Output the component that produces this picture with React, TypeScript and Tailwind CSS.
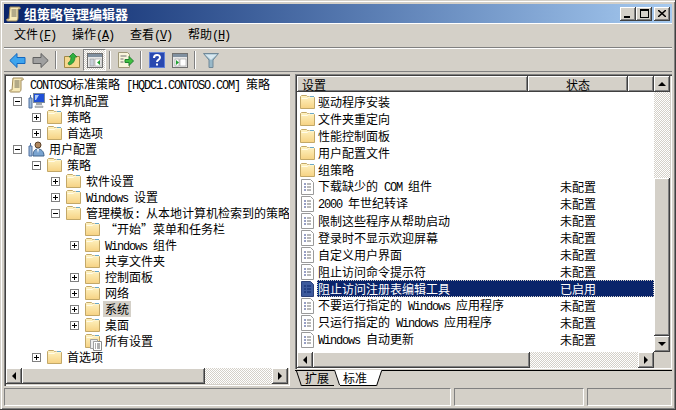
import React from 'react';

const raised = 'bg-[#d4d0c8] shadow-[inset_-1px_-1px_0_#404040,inset_1px_1px_0_#fff,inset_-2px_-2px_0_#808080]';
const sunken = 'shadow-[inset_1px_1px_0_#808080,inset_2px_2px_0_#404040,inset_-1px_-1px_0_#fff]';
const dither = 'bg-[repeating-conic-gradient(#d4d0c8_0_25%,#ffffff_0_50%)] bg-[length:2px_2px]';
const latin = "font-['Liberation_Mono',monospace] text-[12px] tracking-[-1.2px] whitespace-pre";

// SimSun style: latin glyphs are half as wide as the CJK ones, 6px per char
const T: React.FC<{ text: string }> = ({ text }) => (
  <>
    {text.split(/([\x20-\x7e]+)/).map((part, i) =>
      /^[\x20-\x7e]+$/.test(part) ? (
        <span key={i} className={latin}>{part}</span>
      ) : (
        <span key={i}>{part}</span>
      )
    )}
  </>
);

const ScrollIcon = () => (
  <svg width="16" height="16" viewBox="0 0 16 16" className="shrink-0">
    <path d="M4 1h9c1 0 2 1 1 2h-2v9c0 2-1 3-2 3H2c-1 0-2-1-1-2h2z" fill="#f7e9b8" stroke="#a08a58" />
    <path d="M5.500 4h5M5.500 6h5M5.500 8h5M5.500 10h5" stroke="#6e6a58" />
  </svg>
);

const Folder = () => (
  <svg width="15" height="14" viewBox="0 0 15 14" className="shrink-0">
    <defs>
      <linearGradient id="fold" x1="0" y1="0" x2="0" y2="1">
        <stop offset="0" stopColor="#fff4c4" />
        <stop offset="1" stopColor="#f6d283" />
      </linearGradient>
    </defs>
    <path d="M.5 13.500V1.500l1-1h5l1 1h6l1 1v11z" fill="url(#fold)" stroke="#c3a868" />
    <path d="M1.500 3.500h6l1-1.500h5" fill="none" stroke="#fffbe8" />
    <path d="M10 1h4v1h-4z" fill="#6aa8c8" />
  </svg>
);

const PolicyDoc: React.FC<{ selected?: boolean }> = ({ selected }) => (
  <svg width="15" height="16" viewBox="0 0 15 16" className="shrink-0">
    <path d="M1.500.5h9l3 3v12h-12z" fill={selected ? '#3d5a9c' : '#fff'} stroke={selected ? '#2a3f78' : '#9a9a9a'} />
    <path d="M4 5h2M4 8h2M4 11h2" stroke={selected ? '#0a246a' : '#30408a'} />
    <path d="M7 5h4M7 8h4M7 11h4" stroke={selected ? '#0a246a' : '#707070'} />
  </svg>
);

const Computer = () => (
  <svg width="17" height="16" viewBox="0 0 17 16" className="shrink-0">
    <rect x="5.500" y=".5" width="11" height="9" fill="#2050d8" stroke="#7a8a9a" />
    <path d="M7 2h4l-3 5H7z" fill="#a8c8f8" />
    <path d="M8 10h6v2H8z" fill="#a0a8b0" />
    <path d="M7 13h8v1.500H7z" fill="#c0c4c8" stroke="#808890" strokeWidth=".5" />
    <path d="M1 5h3v10H1z" fill="#9ab8d8" stroke="#5070a0" />
    <path d="M2.500 2v3" stroke="#5070a0" />
  </svg>
);

const UserIcon = () => (
  <svg width="17" height="16" viewBox="0 0 17 16" className="shrink-0">
    <circle cx="10" cy="4" r="3" fill="#b08860" stroke="#5a4028" />
    <path d="M5 15c0-5 2-7 5-7s6 2 6 7z" fill="#7aa4d0" stroke="#40648c" />
    <path d="M9 8l1 4 1-4z" fill="#fff" />
    <path d="M1 5h3v10H1z" fill="#9ab8d8" stroke="#5070a0" />
    <path d="M2.500 2v3" stroke="#5070a0" />
  </svg>
);

const AllSettings = () => (
  <div className="relative w-[15px] h-[14px] shrink-0">
    <Folder />
    <svg width="12" height="12" viewBox="0 0 12 12" className="absolute left-[5px] top-[5px]">
      <path d="M3.500 2.500h8v9h-8z" fill="#fff" stroke="#8a8a8a" />
      <path d="M.5.5h7v2h-4v7h-3z" fill="#eee" stroke="#a0a0a0" />
      <path d="M5 5h1M7 5h3M5 7h1M7 7h3M5 9h1M7 9h3" stroke="#606060" />
    </svg>
  </div>
);

const Expander: React.FC<{ open?: boolean }> = ({ open }) => (
  <span className="relative w-[9px] h-[9px] border border-[#808080] bg-white block shrink-0">
    <span className="absolute left-[1px] top-[3px] w-[5px] h-[1px] bg-black" />
    {!open && <span className="absolute left-[3px] top-[1px] w-[1px] h-[5px] bg-black" />}
  </span>
);

type TreeRow = { level: number; text: string; exp?: 'open' | 'closed'; icon?: 'computer' | 'user' | 'all'; selected?: boolean };

const treeRows: TreeRow[] = [
  { level: 0, text: '计算机配置', exp: 'open', icon: 'computer' },
  { level: 1, text: '策略', exp: 'closed' },
  { level: 1, text: '首选项', exp: 'closed' },
  { level: 0, text: '用户配置', exp: 'open', icon: 'user' },
  { level: 1, text: '策略', exp: 'open' },
  { level: 2, text: '软件设置', exp: 'closed' },
  { level: 2, text: 'Windows 设置', exp: 'closed' },
  { level: 2, text: '管理模板: 从本地计算机检索到的策略', exp: 'open' },
  { level: 3, text: '“开始”菜单和任务栏' },
  { level: 3, text: 'Windows 组件', exp: 'closed' },
  { level: 3, text: '共享文件夹' },
  { level: 3, text: '控制面板', exp: 'closed' },
  { level: 3, text: '网络', exp: 'closed' },
  { level: 3, text: '系统', exp: 'closed', selected: true },
  { level: 3, text: '桌面', exp: 'closed' },
  { level: 3, text: '所有设置', icon: 'all' },
  { level: 1, text: '首选项', exp: 'closed' },
];

type ListRow = { text: string; state?: string; folder?: boolean; selected?: boolean };

const listRows: ListRow[] = [
  { text: '驱动程序安装', folder: true },
  { text: '文件夹重定向', folder: true },
  { text: '性能控制面板', folder: true },
  { text: '用户配置文件', folder: true },
  { text: '组策略', folder: true },
  { text: '下载缺少的 COM 组件', state: '未配置' },
  { text: '2000 年世纪转译', state: '未配置' },
  { text: '限制这些程序从帮助启动', state: '未配置' },
  { text: '登录时不显示欢迎屏幕', state: '未配置' },
  { text: '自定义用户界面', state: '未配置' },
  { text: '阻止访问命令提示符', state: '未配置' },
  { text: '阻止访问注册表编辑工具', state: '已启用', selected: true },
  { text: '不要运行指定的 Windows 应用程序', state: '未配置' },
  { text: '只运行指定的 Windows 应用程序', state: '未配置' },
  { text: 'Windows 自动更新', state: '未配置' },
];

const Arrow: React.FC<{ dir: 'up' | 'down' | 'left' | 'right' }> = ({ dir }) => {
  const pts = { up: '4,0 8,4 0,4', down: '0,0 8,0 4,4', left: '4,0 4,8 0,4', right: '0,0 4,4 0,8' }[dir];
  const vertical = dir === 'up' || dir === 'down';
  return (
    <svg width={vertical ? 8 : 4} height={vertical ? 4 : 8} viewBox={vertical ? '0 0 8 4' : '0 0 4 8'}>
      <polygon points={pts} fill="#000" />
    </svg>
  );
};

const ScrollBtn: React.FC<{ dir: 'up' | 'down' | 'left' | 'right' }> = ({ dir }) => (
  <div className={`${raised} w-[16px] h-[16px] shrink-0 flex items-center justify-center`}>
    <Arrow dir={dir} />
  </div>
);

const Sep = () => <div className="w-[2px] h-[18px] mx-[3px] border-l border-[#808080] border-r border-r-white" />;

const ToolBtn: React.FC<{ children: React.ReactNode; active?: boolean }> = ({ children, active }) => (
  <div className={`w-[23px] h-[22px] flex items-center justify-center ${active ? `border border-t-[#808080] border-l-[#808080] border-r-white border-b-white ${dither}` : ''}`}>
    {children}
  </div>
);

const PanelIcon: React.FC<{ right?: boolean }> = ({ right }) => (
  <svg width="16" height="15" viewBox="0 0 16 15">
    <rect x=".5" y=".5" width="15" height="14" fill="#e8e8e8" stroke="#707070" />
    <path d="M1 1h14v3H1z" fill="#8090a0" />
    <rect x="3" y="6" width="4" height="7" fill={right ? '#fff' : '#c8d0d8'} stroke="#8a8a8a" strokeWidth=".5" />
    <rect x="8" y="6" width="6" height="7" fill="#fff" stroke="#8a8a8a" strokeWidth=".5" />
    {right ? <polygon points="4,7 7,9.500 4,12" fill="#20a030" /> : <polygon points="13,7 10,9.500 13,12" fill="#20a030" />}
  </svg>
);

const App: React.FC = () => {
  return (
    <div className="w-[676px] h-[410px] overflow-hidden bg-[#d4d0c8] p-[4px] flex flex-col text-[12px] leading-[16px] text-black font-['Noto_Sans_CJK_SC','Liberation_Sans',sans-serif] shadow-[inset_-1px_-1px_0_#404040,inset_1px_1px_0_#d4d0c8,inset_2px_2px_0_#fff,inset_-2px_-2px_0_#808080]">
      {/* title bar */}
      <div className="h-[19px] shrink-0 flex items-center pl-[2px] pr-[2px] bg-gradient-to-r from-[#0a246a] to-[#a6caf0]">
        <ScrollIcon />
        <span className="ml-[2px] text-white font-bold text-[13px]">组策略管理编辑器</span>
        <div className="ml-auto flex items-center">
          <div className={`${raised} w-[16px] h-[14px] flex items-end pl-[4px] pb-[3px]`}>
            <span className="block w-[6px] h-[2px] bg-black" />
          </div>
          <div className={`${raised} w-[16px] h-[14px] flex items-center justify-center`}>
            <span className="block w-[9px] h-[9px] border border-black border-t-2" />
          </div>
          <div className={`${raised} w-[16px] h-[14px] ml-[2px] flex items-center justify-center`}>
            <svg width="8" height="7" viewBox="0 0 8 7"><path d="M0 0l8 7M8 0L0 7" stroke="#000" strokeWidth="1.500" /></svg>
          </div>
        </div>
      </div>

      {/* menu */}
      <div className="h-[25px] shrink-0 flex items-center pl-[10px] gap-[16px] pb-[1px] border-t border-t-white border-b border-b-[#808080]">
        {[['文件', 'F'], ['操作', 'A'], ['查看', 'V'], ['帮助', 'H']].map(([label, key]) => (
          <span key={key} className="w-[42px] whitespace-nowrap">
            {label}
            <span className={latin}>(<span className="underline">{key}</span>)</span>
          </span>
        ))}
      </div>

      {/* toolbar */}
      <div className="h-[24px] shrink-0 flex items-center pl-[2px] border-t border-t-white border-b border-b-[#808080]">
        <ToolBtn>
          <svg width="17" height="15" viewBox="0 0 17 15"><path d="M8 .5L.8 7.500 8 14.500v-4h8v-6H8z" fill="#3ea4ee" stroke="#1468c0" /></svg>
        </ToolBtn>
        <ToolBtn>
          <svg width="17" height="15" viewBox="0 0 17 15"><path d="M9 .5l7.200 7-7.200 7v-4H1v-6h8z" fill="#a0a0a0" stroke="#606060" /></svg>
        </ToolBtn>
        <Sep />
        <ToolBtn>
          <svg width="16" height="16" viewBox="0 0 16 16">
            <path d="M.5 15.500v-11h5l1-1h4v1h5v11z" fill="#f6d88c" stroke="#a08848" />
            <path d="M4 11c2-1 3-3 3-6H5l4-4 4 4h-2c0 4-2 7-6 8z" fill="#30b040" stroke="#187828" strokeWidth=".7" />
          </svg>
        </ToolBtn>
        <ToolBtn active><PanelIcon /></ToolBtn>
        <Sep />
        <ToolBtn>
          <svg width="17" height="16" viewBox="0 0 17 16">
            <path d="M1.500.5h9l2 2v13h-11z" fill="#f8f4dc" stroke="#a09878" />
            <path d="M3.500 4h6M3.500 7h3M3.500 10h3" stroke="#707070" />
            <path d="M8 7.500h4v-3l4.500 4.500-4.500 4.500v-3H8z" fill="#40c040" stroke="#208030" />
          </svg>
        </ToolBtn>
        <Sep />
        <ToolBtn>
          <svg width="16" height="16" viewBox="0 0 16 16">
            <rect width="16" height="16" fill="#2848b0" />
            <rect x=".5" y=".5" width="15" height="15" fill="none" stroke="#6080d8" />
            <path d="M5 6c0-4 6-4 6-.5 0 2-3 2.500-3 4.500" fill="none" stroke="#fff" strokeWidth="2" />
            <rect x="7" y="11.500" width="2" height="2" fill="#fff" />
          </svg>
        </ToolBtn>
        <ToolBtn><PanelIcon right /></ToolBtn>
        <Sep />
        <ToolBtn>
          <svg width="16" height="16" viewBox="0 0 16 16">
            <path d="M.5 1.500h15L10 8v7.500H6V8z" fill="#98b8c8" stroke="#708898" />
            <path d="M2 2.500h12L8 8z" fill="#d8e8f0" />
          </svg>
        </ToolBtn>
      </div>

      {/* panes */}
      <div className="flex-1 min-h-0 flex gap-[5px] mt-[2px]">
        <div className={`w-[286px] shrink-0 flex flex-col p-[2px] pr-[1px] pb-[2px] ${sunken}`}>
          <div className="flex-1 min-h-0 bg-white overflow-hidden pt-[1px] whitespace-nowrap">
            <div className="h-[16px] flex items-center pl-[3px]">
              <ScrollIcon />
              <span className="ml-[5px]"><T text="CONTOSO标准策略 [HQDC1.CONTOSO.COM] 策略" /></span>
            </div>
            {treeRows.map((row, i) => (
              <div
                key={i}
                className={`h-[16px] flex items-center ${row.level === 0 ? 'pl-[7px]' : row.level === 1 ? 'pl-[26px]' : row.level === 2 ? 'pl-[45px]' : 'pl-[64px]'}`}
              >
                <span className="w-[15px] shrink-0">{row.exp && <Expander open={row.exp === 'open'} />}</span>
                {row.icon === 'computer' ? <Computer /> : row.icon === 'user' ? <UserIcon /> : row.icon === 'all' ? <AllSettings /> : <Folder />}
                <span className={`${row.level === 0 ? 'ml-[2px]' : 'ml-[3px]'} px-[2px] h-[16px] ${row.selected ? 'bg-[#d4d0c8]' : ''}`}>
                  <T text={row.text} />
                </span>
              </div>
            ))}
          </div>
          <div className="h-[16px] shrink-0 flex pr-[1px]">
            <ScrollBtn dir="left" />
            <div className={`${raised} w-[183px]`} />
            <div className={`flex-1 ${dither}`} />
            <ScrollBtn dir="right" />
          </div>
        </div>

        <div className="flex-1 min-w-0 flex flex-col">
          <div className={`h-[295px] shrink-0 flex p-[2px] pb-[1px] ${sunken}`}>
            <div className="flex-1 min-w-0 flex flex-col">
              <div className="h-[16px] shrink-0 flex">
                <div className={`${raised} w-[231px] pl-[5px] leading-[17px]`}>设置</div>
                <div className={`${raised} w-[100px] text-center leading-[17px]`}>状态</div>
                <div className={`${raised} flex-1`} />
              </div>
              <div className="flex-1 min-h-0 bg-white pt-[1px] overflow-hidden">
                {listRows.map((row, i) => (
                  <div key={i} className="h-[17px] flex items-center pl-[3px]">
                    {row.folder ? <Folder /> : <PolicyDoc selected={row.selected} />}
                    <div className={`flex-1 flex items-center h-[17px] ml-[2px] pl-[1px] ${row.selected ? 'bg-[#0a246a] text-white outline-1 -outline-offset-1 outline-dotted outline-[#d4d0c8]' : ''}`}>
                      <span className="w-[242px] whitespace-nowrap"><T text={row.text} /></span>
                      <span>{row.state}</span>
                    </div>
                  </div>
                ))}
              </div>
              <div className="h-[16px] shrink-0 flex">
                <ScrollBtn dir="left" />
                <div className={`${raised} w-[217px]`} />
                <div className={`flex-1 ${dither}`} />
                <ScrollBtn dir="right" />
              </div>
            </div>
            <div className="w-[16px] shrink-0 flex flex-col">
              <ScrollBtn dir="up" />
              <div className={`h-[86px] ${dither}`} />
              <div className={`${raised} flex-1`} />
              <ScrollBtn dir="down" />
              <div className="h-[16px]" />
            </div>
          </div>

          {/* tabs: the active one breaks through the strip's top line */}
          <div className="flex-1 min-h-0 flex items-start pl-[1px] border-t border-t-black mt-[1px]">
            <svg width="6" height="15" viewBox="0 0 6 15" className="shrink-0"><path d="M.5 0l5 15" stroke="#000" fill="none" /></svg>
            <div className="w-[32px] h-[15px] pl-[3px] leading-[14px] border-b border-black">扩展</div>
            <svg width="6" height="15" viewBox="0 0 6 15" className="shrink-0 -mt-[1px]"><path d="M6 0v15H5L0 0z" fill="#fff" /><path d="M.5 0l5 15" stroke="#000" fill="none" /></svg>
            <div className="w-[36px] h-[16px] -mt-[1px] pt-[1px] pl-[3px] bg-white leading-[14px] border-b border-black">标准</div>
            <svg width="6" height="16" viewBox="0 0 6 16" className="shrink-0 -mt-[1px]"><path d="M0 0h5.500L.5 16H0z" fill="#fff" /><path d="M5.500 1L.5 16" stroke="#000" fill="none" /></svg>
          </div>
        </div>
      </div>

      {/* status bar */}
      <div className="h-[18px] shrink-0 flex gap-[3px] mt-[2px]">
        {['w-[447px]', 'w-[130px]', 'flex-1'].map((w) => (
          <div key={w} className={`${w} border border-t-[#808080] border-l-[#808080] border-r-white border-b-white`} />
        ))}
      </div>
    </div>
  );
};

export default App;
